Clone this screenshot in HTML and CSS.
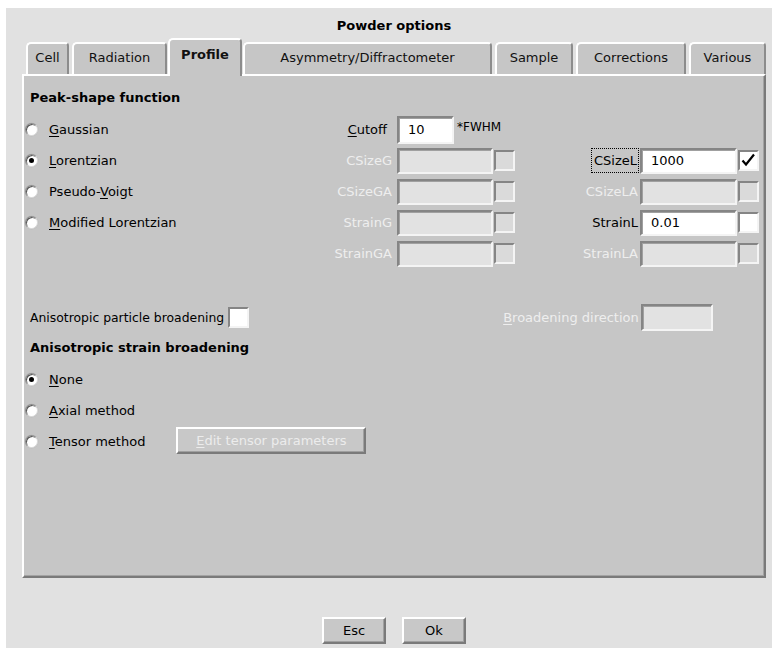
FILE: index.html
```html
<!DOCTYPE html>
<html>
<head>
<meta charset="utf-8">
<title>Powder options</title>
<link rel="stylesheet" href="styles.css">
</head>
<body>
<div class="dialog">
  <div class="title">Powder options</div>

  <div class="tabs">
    <div class="tab tab-cell">Cell</div>
    <div class="tab tab-radiation">Radiation</div>
    <div class="tab tab-profile selected">Profile</div>
    <div class="tab tab-asym">Asymmetry/Diffractometer</div>
    <div class="tab tab-sample">Sample</div>
    <div class="tab tab-corrections">Corrections</div>
    <div class="tab tab-various">Various</div>
  </div>

  <div class="panel">
    <div class="heading">Peak-shape function</div>

    <div class="params">
      <!-- row 1 -->
      <label class="radio"><span class="dot"></span><span><u>G</u>aussian</span></label>
      <span class="plabel cutoff"><u>C</u>utoff</span>
      <div class="cutoff-group">
        <div class="entry short">10</div>
        <span class="unit">*FWHM</span>
      </div>

      <!-- row 2 -->
      <label class="radio on"><span class="dot"></span><span><u>L</u>orentzian</span></label>
      <span class="plabel dis">CSizeG</span>
      <div class="cell-entry"><div class="entry off"></div></div>
      <div class="cell-check"><span class="check off"></span></div>
      <span class="plabel right"><span class="focus">CSizeL</span></span>
      <div class="cell-entry r"><div class="entry">1000</div></div>
      <div class="cell-check"><span class="check"><svg viewBox="0 0 17 17" width="17" height="17"><path d="M2.5 8.5 L6 12.5 L14 2.5" fill="none" stroke="#000" stroke-width="2.2"/></svg></span></div>

      <!-- row 3 -->
      <label class="radio"><span class="dot"></span><span>Pseudo-<u>V</u>oigt</span></label>
      <span class="plabel dis">CSizeGA</span>
      <div class="cell-entry"><div class="entry off"></div></div>
      <div class="cell-check"><span class="check off"></span></div>
      <span class="plabel right dis">CSizeLA</span>
      <div class="cell-entry r"><div class="entry off"></div></div>
      <div class="cell-check"><span class="check off"></span></div>

      <!-- row 4 -->
      <label class="radio"><span class="dot"></span><span><u>M</u>odified Lorentzian</span></label>
      <span class="plabel dis">StrainG</span>
      <div class="cell-entry"><div class="entry off"></div></div>
      <div class="cell-check"><span class="check off"></span></div>
      <span class="plabel right">StrainL</span>
      <div class="cell-entry r"><div class="entry">0.01</div></div>
      <div class="cell-check"><span class="check"></span></div>

      <!-- row 5 -->
      <span class="blank"></span>
      <span class="plabel dis">StrainGA</span>
      <div class="cell-entry"><div class="entry off"></div></div>
      <div class="cell-check"><span class="check off"></span></div>
      <span class="plabel right dis">StrainLA</span>
      <div class="cell-entry r"><div class="entry off"></div></div>
      <div class="cell-check"><span class="check off"></span></div>
    </div>

    <div class="aniso-row">
      <span class="aniso-label">Anisotropic particle broadening</span>
      <span class="check"></span>
      <span class="dir-label dis"><u>B</u>roadening direction</span>
      <div class="entry off dir"></div>
    </div>

    <div class="heading second">Anisotropic strain broadening</div>

    <div class="strain">
      <label class="radio on"><span class="dot"></span><span><u>N</u>one</span></label>
      <label class="radio"><span class="dot"></span><span><u>A</u>xial method</span></label>
      <div class="tensor-row">
        <label class="radio"><span class="dot"></span><span><u>T</u>ensor method</span></label>
        <button class="btn wide dis"><u>E</u>dit tensor parameters</button>
      </div>
    </div>
  </div>

  <div class="actions">
    <button class="btn">Esc</button>
    <button class="btn">Ok</button>
  </div>
</div>
</body>
</html>
```

FILE: styles.css
```css
html, body {
  margin: 0;
  padding: 0;
  background: #ffffff;
}

body {
  font-family: "DejaVu Sans", "Liberation Sans", sans-serif;
  font-size: 13px;
  color: #000;
}

u {
  text-decoration: underline;
  text-underline-offset: 2px;
}

.dialog {
  margin: 8px 0 0 6px;
  width: 766px;
  height: 640px;
  background: #e1e1e1;
  display: flex;
  flex-direction: column;
}

.title {
  padding-top: 5px;
  height: 25px;
  line-height: 26px;
  text-align: center;
  font-weight: bold;
  padding-left: 10px;
}

/* ---------- notebook tabs ---------- */
.tabs {
  display: flex;
  align-items: flex-end;
  height: 36px;
  margin-left: 16px;
  padding-left: 4px;
  position: relative;
  z-index: 1;
}

.tab {
  box-sizing: border-box;
  height: 32px;
  background: #c6c6c6;
  border-top: 2px solid #ffffff;
  border-left: 2px solid #ffffff;
  border-right: 2px solid #8c8c8c;
  border-radius: 5px 4px 0 0;
  text-align: center;
  line-height: 27px;
  margin-right: 3px;
  color: #111;
}

.tab.selected {
  height: 38px;
  margin-bottom: -2px;
  font-weight: bold;
  line-height: 29px;
  margin-right: 1px;
  margin-left: -2px;
}

.tab-cell { width: 43px; }
.tab-radiation { width: 95px; }
.tab-profile { width: 74px; }
.tab-asym { width: 249px; }
.tab-sample { width: 78px; }
.tab-corrections { width: 110px; }
.tab-various { width: 77px; margin-right: 0; }

/* ---------- panel ---------- */
.panel {
  box-sizing: border-box;
  margin-left: 16px;
  width: 744px;
  height: 504px;
  background: #c6c6c6;
  border-top: 2px solid #ffffff;
  border-left: 2px solid #ffffff;
  border-right: 2px solid #7a7a7a;
  border-bottom: 2px solid #7a7a7a;
  box-shadow: inset -1px -1px 0 #a3a3a3;
}

.heading {
  font-weight: bold;
  margin: 12px 0 0 6px;
  height: 20px;
  line-height: 20px;
}

.heading.second {
  margin-top: 7px;
}

.params {
  margin-top: 6px;
  display: grid;
  grid-template-columns: 306px 64px 99px 22px 125px 97px 22px;
  grid-auto-rows: 31px;
  align-items: center;
}

.radio {
  display: flex;
  align-items: center;
  gap: 11px;
  padding-left: 1px;
  height: 31px;
}

.dot {
  box-sizing: border-box;
  width: 13px;
  height: 13px;
  border-radius: 50%;
  background: #ffffff;
  border: 1px solid;
  border-color: #8a8a8a #d8d8d8 #d8d8d8 #8a8a8a;
  box-shadow: inset 1px 1px 0 #555, 0 0 0 0.5px #bdbdbd;
  display: flex;
  align-items: center;
  justify-content: center;
}

.radio.on .dot::after {
  content: "";
  width: 5px;
  height: 5px;
  border-radius: 50%;
  background: #000;
}

.plabel {
  text-align: right;
  padding-right: 2px;
  white-space: nowrap;
}

.plabel.cutoff {
  padding-right: 7px;
}

.dis {
  color: #eeeeee;
}

.focus {
  outline: 1px dotted #000;
  outline-offset: 0;
  padding: 4px 1px 4px 2px;
}

.cutoff-group {
  grid-column: 3 / 8;
  display: flex;
  align-items: flex-start;
  padding-left: 3px;
}

.unit {
  padding-left: 3px;
  margin-top: 4px;
  font-size: 12px;
}

.cell-entry {
  display: flex;
  justify-content: flex-end;
}

.cell-check {
  display: flex;
  justify-content: flex-end;
}

.entry {
  box-sizing: border-box;
  width: 96px;
  height: 26px;
  background: #ffffff;
  border: 2px solid;
  border-color: #858585 #f4f4f4 #f4f4f4 #858585;
  box-shadow: inset 1px 1px 0 #a0a0a0;
  padding-left: 9px;
  line-height: 22px;
}

.entry.short {
  width: 57px;
  height: 28px;
  line-height: 24px;
}

.cell-entry.r .entry {
  width: 97px;
}

.entry.off {
  background: #e2e2e2;
}

.check {
  box-sizing: border-box;
  width: 21px;
  height: 21px;
  background: #ffffff;
  border: 2px solid;
  border-color: #858585 #f4f4f4 #f4f4f4 #858585;
  display: flex;
  align-items: center;
  justify-content: center;
}

.check.off {
  background: #dadada;
}

/* ---------- anisotropic rows ---------- */
.aniso-row {
  display: flex;
  align-items: center;
  height: 28px;
  margin-top: 34px;
  padding-left: 6px;
}

.aniso-label {
  margin-right: 4px;
  font-size: 12.4px;
}

.dir-label {
  margin-left: 254px;
  width: 128px;
  white-space: nowrap;
}

.entry.dir {
  width: 72px;
  height: 27px;
  margin-left: 10px;
}

.strain {
  margin-top: 6px;
  display: flex;
  flex-direction: column;
}

.tensor-row {
  display: flex;
  align-items: center;
  gap: 31px;
}

/* ---------- buttons ---------- */
.btn {
  box-sizing: border-box;
  font-family: inherit;
  font-size: 13px;
  background: #c8c8c8;
  border: 2px solid;
  border-color: #ffffff #7a7a7a #7a7a7a #ffffff;
  box-shadow: inset -1px -1px 0 #a0a0a0;
  width: 64px;
  height: 27px;
  padding: 0;
  color: #000;
}

.btn.wide {
  width: 190px;
  height: 27px;
  margin-top: -2px;
}

.btn.dis {
  color: #ececec;
}

.actions {
  display: flex;
  justify-content: center;
  gap: 16px;
  margin-top: 39px;
  padding-left: 10px;
}
```
